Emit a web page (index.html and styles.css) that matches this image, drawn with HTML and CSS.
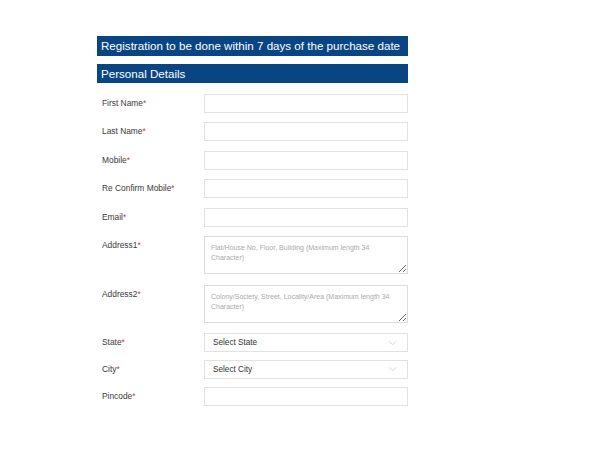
FILE: index.html
```html
<!DOCTYPE html>
<html>
<head>
<meta charset="utf-8">
<link rel="stylesheet" href="styles.css">
</head>
<body>
<div class="wrap">
  <div class="bar bar-top">Registration to be done within 7 days of the purchase date</div>
  <div class="bar bar-sec">Personal Details</div>
  <div class="form">
    <div class="row"><label class="lbl">First Name<span class="req">*</span></label><input class="inp" type="text"></div>
    <div class="row"><label class="lbl">Last Name<span class="req">*</span></label><input class="inp" type="text"></div>
    <div class="row"><label class="lbl">Mobile<span class="req">*</span></label><input class="inp" type="text"></div>
    <div class="row"><label class="lbl">Re Confirm Mobile<span class="req">*</span></label><input class="inp" type="text"></div>
    <div class="row"><label class="lbl">Email<span class="req">*</span></label><input class="inp" type="text"></div>
    <div class="row row-ta"><label class="lbl">Address1<span class="req">*</span></label><textarea class="ta" placeholder="Flat/House No, Floor, Building (Maximum length 34 Character)"></textarea></div>
    <div class="row row-ta"><label class="lbl">Address2<span class="req">*</span></label><textarea class="ta" placeholder="Colony/Society, Street, Locality/Area (Maximum length 34 Character)"></textarea></div>
    <div class="row row-sel"><label class="lbl">State<span class="req">*</span></label>
      <div class="sel"><span>Select State</span><svg width="9" height="6" viewBox="0 0 9 6"><path d="M1 1.5 L4.5 4.5 L8 1.5" fill="none" stroke="#d6d6d6" stroke-width="1"/></svg></div></div>
    <div class="row row-sel"><label class="lbl">City<span class="req">*</span></label>
      <div class="sel"><span>Select City</span><svg width="9" height="6" viewBox="0 0 9 6"><path d="M1 1.5 L4.5 4.5 L8 1.5" fill="none" stroke="#d6d6d6" stroke-width="1"/></svg></div></div>
    <div class="row"><label class="lbl">Pincode<span class="req">*</span></label><input class="inp" type="text"></div>
  </div>
</div>
</body>
</html>
```
FILE: styles.css
```css
html, body {
  margin: 0;
  padding: 0;
  background: #ffffff;
}
body {
  font-family: "Liberation Sans", Arial, sans-serif;
}
.wrap {
  width: 311px;
  margin-left: 97px;
  padding-top: 36px;
}
.bar {
  background: #0a4583;
  color: #ffffff;
  font-size: 11.6px;
  height: 20px;
  line-height: 20px;
  padding-left: 4px;
  box-sizing: border-box;
  white-space: nowrap;
}
.bar-top {
  margin-bottom: 8px;
}
.bar-sec {
  height: 19px;
  line-height: 19px;
}
.form {
  padding-top: 10.6px;
}
.row {
  display: flex;
  align-items: flex-start;
  height: 28.5px;
}
.row-ta {
  height: 48.5px;
}
.row-sel {
  height: 26.8px;
}
.lbl {
  width: 107px;
  padding-left: 5px;
  box-sizing: border-box;
  font-size: 8.4px;
  color: #3a3a3a;
  line-height: 19px;
}
.req {
  color: #e03030;
}
.inp {
  width: 204px;
  height: 19px;
  box-sizing: border-box;
  border: 1px solid #e2e2e2;
  margin: 0;
  padding: 0;
  outline: none;
  background: #fff;
}
.ta {
  width: 204px;
  height: 38px;
  box-sizing: border-box;
  border: 1px solid #dcdcdc;
  margin: 0;
  padding: 6px 6px 4px 6px;
  font-family: "Liberation Sans", Arial, sans-serif;
  font-size: 7px;
  line-height: 10px;
  color: #555;
  outline: none;
  resize: vertical;
}
.ta::placeholder {
  color: #aaaaaa;
}
.sel {
  width: 204px;
  height: 19px;
  box-sizing: border-box;
  border: 1px solid #e2e2e2;
  display: flex;
  align-items: center;
  justify-content: space-between;
  padding: 0 10px 0 8px;
  font-size: 8.2px;
  color: #333;
}
```
